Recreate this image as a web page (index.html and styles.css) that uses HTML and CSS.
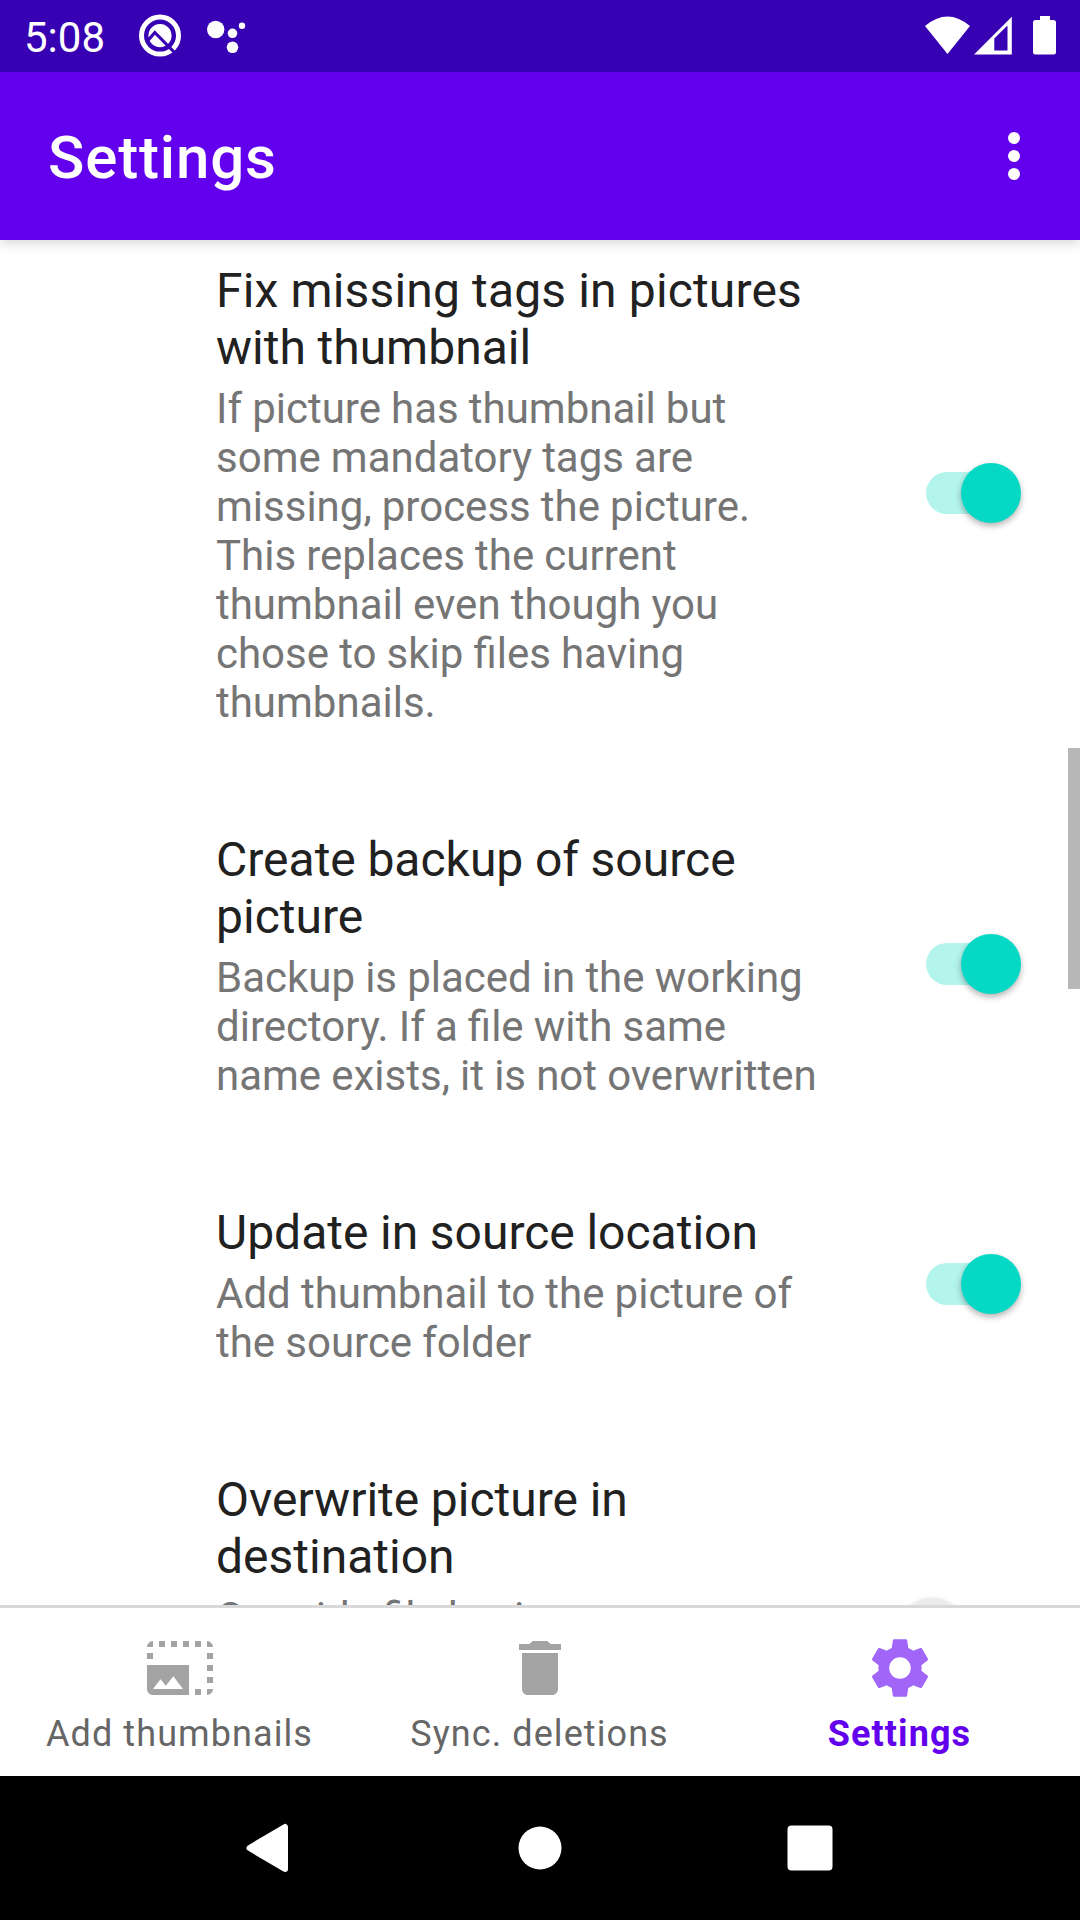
FILE: index.html
```html
<!DOCTYPE html>
<html lang="en">
<head>
<meta charset="utf-8">
<title>Settings</title>
<link rel="stylesheet" href="styles.css">
</head>
<body>
<div class="screen">
  <div class="status">
    <span class="clock">5:08</span>
    <svg class="notices" width="120" height="72" viewBox="130 0 120 72">
      <circle cx="160" cy="35.600" r="18.500" fill="none" stroke="#fff" stroke-width="5"/>
      <circle cx="160" cy="35.600" r="11.600" fill="#fff"/>
      <path d="M147.500 41L154.800 32.500L176 54" fill="none" stroke="#3700b3" stroke-width="3.200"/>
      <circle cx="215.700" cy="29.500" r="8.700" fill="#fff"/>
      <circle cx="232.500" cy="33.300" r="4.800" fill="#fff"/>
      <circle cx="242" cy="25.700" r="3.200" fill="#fff"/>
      <circle cx="232.500" cy="47.300" r="5.800" fill="#fff"/>
    </svg>
    <svg class="signals" width="140" height="72" viewBox="920 0 140 72">
      <path fill="#fff" d="M925 26Q947.500 7 970 26L947.500 54Z"/>
      <path fill="#fff" fill-rule="evenodd" d="M974 54.500L1011.800 16.700V54.500ZM994.300 38.500V50.500H1007.500V25.500Z"/>
      <path fill="#fff" d="M1040 16H1050V20H1053.500Q1056 20 1056 22.500V52Q1056 54.500 1053.500 54.500H1035.500Q1033 54.500 1033 52V22.500Q1033 20 1035.500 20H1040Z"/>
    </svg>
  </div>
  <header class="appbar">
    <h1>Settings</h1>
    <svg width="72" height="72" viewBox="0 0 24 24" fill="#fff"><circle cx="12" cy="6" r="2"/><circle cx="12" cy="12" r="2"/><circle cx="12" cy="18" r="2"/></svg>
  </header>
  <main class="content">
    <div class="list">
      <div class="pref">
        <div class="text">
          <h2><span class="loose">Fix missing tags in pictures</span><br>with thumbnail</h2>
          <p>If picture has thumbnail but<br>some mandatory tags are<br>missing, process the picture.<br>This replaces the current<br>thumbnail even though you<br>chose to skip files having<br>thumbnails.</p>
        </div>
        <div class="switch on"></div>
      </div>
      <div class="pref">
        <div class="text">
          <h2>Create backup of source<br>picture</h2>
          <p>Backup is placed in the working<br>directory. If a file with same<br>name exists, it is not overwritten</p>
        </div>
        <div class="switch on"></div>
      </div>
      <div class="pref">
        <div class="text">
          <h2>Update in source location</h2>
          <p>Add thumbnail to the picture of<br>the source folder</p>
        </div>
        <div class="switch on"></div>
      </div>
      <div class="pref">
        <div class="text">
          <h2>Overwrite picture in<br>destination</h2>
          <p class="four-lines">Override file having</p>
        </div>
        <div class="switch"></div>
      </div>
    </div>
    <div class="scrollbar"></div>
  </main>
  <nav class="tabs">
    <div class="tab">
      <svg width="72" height="72" viewBox="0 0 24 24"><path d="M21 15h2v2h-2v-2zm0-4h2v2h-2v-2zm2 8h-2v2c1 0 2-1 2-2zM13 3h2v2h-2V3zm8 4h2v2h-2V7zm0-4v2h2c0-1-1-2-2-2zM1 7h2v2H1V7zm16-4h2v2h-2V3zm0 16h2v2h-2v-2zM3 3C2 3 1 4 1 5h2V3zm6 0h2v2H9V3zM5 3h2v2H5V3zm-4 8v8c0 1.100.9 2 2 2h12V11H1zm2 8l2.500-3.210 1.790 2.150 2.500-3.220L13 19H3z"/></svg>
      <span>Add thumbnails</span>
    </div>
    <div class="tab">
      <svg width="72" height="72" viewBox="0 0 24 24"><path d="M6 19c0 1.100.9 2 2 2h8c1.100 0 2-.9 2-2V7H6v12zM19 4h-3.500l-1-1h-5l-1 1H5v2h14V4z"/></svg>
      <span>Sync. deletions</span>
    </div>
    <div class="tab active">
      <svg width="72" height="72" viewBox="0 0 24 24"><path d="M19.14,12.94c0.04-0.3,0.06-0.61,0.06-0.94c0-0.32-0.02-0.64-0.07-0.94l2.03-1.58c0.18-0.14,0.23-0.41,0.12-0.61l-1.92-3.32c-0.12-0.22-0.37-0.29-0.59-0.22l-2.39,0.96c-0.5-0.38-1.03-0.7-1.62-0.94L14.4,2.81c-0.04-0.24-0.24-0.41-0.48-0.41h-3.84c-0.24,0-0.43,0.17-0.47,0.41L9.25,5.35C8.66,5.59,8.12,5.92,7.63,6.29L5.24,5.33c-0.22-0.08-0.47,0-0.59,0.22L2.74,8.87C2.62,9.08,2.66,9.34,2.86,9.48l2.03,1.58C4.84,11.36,4.8,11.69,4.8,12s0.02,0.64,0.07,0.94l-2.03,1.58c-0.18,0.14-0.23,0.41-0.12,0.61l1.92,3.32c0.12,0.22,0.37,0.29,0.59,0.22l2.39-0.96c0.5,0.38,1.03,0.7,1.62,0.94l0.36,2.54c0.05,0.24,0.24,0.41,0.48,0.41h3.84c0.24,0,0.44-0.17,0.47-0.41l0.36-2.54c0.59-0.24,1.13-0.56,1.62-0.94l2.39,0.96c0.22,0.08,0.47,0,0.59-0.22l1.92-3.32c0.12-0.22,0.07-0.47-0.12-0.61L19.14,12.94z M12,15.6c-1.98,0-3.6-1.62-3.6-3.6s1.62-3.6,3.6-3.6s3.6,1.62,3.6,3.6S13.98,15.6,12,15.6z"/></svg>
      <span>Settings</span>
    </div>
  </nav>
  <div class="sysnav">
    <svg width="270" height="144" viewBox="0 0 270 144"><path fill="#fff" stroke="#fff" stroke-width="6" stroke-linejoin="round" d="M114.500 72L150 51V93Z"/></svg>
    <svg width="270" height="144" viewBox="0 0 270 144"><circle cx="135" cy="72" r="21.500" fill="#fff"/></svg>
    <svg width="270" height="144" viewBox="0 0 270 144"><rect x="112.500" y="49.500" width="45" height="45" rx="4" fill="#fff"/></svg>
  </div>
</div>
</body>
</html>
```
FILE: styles.css
```css
* { box-sizing: border-box; }
body { margin: 0; font-family: Roboto, sans-serif; }
h1, h2, p { margin: 0; font-weight: 400; }
svg { display: block; flex: none; }
.screen { width: 1080px; height: 1920px; display: flex; flex-direction: column; overflow: hidden; background: #fff; }
.status { height: 72px; background: #3700b3; color: #fff; display: flex; align-items: center; padding: 0 20px 0 24px; flex: none; position: relative; z-index: 2; }
.clock { font-size: 42px; line-height: 49px; width: 106px; padding-top: 3px; }
.signals { margin-left: auto; }
.appbar { height: 168px; background: #6200ee; color: #fff; display: flex; align-items: center; justify-content: space-between; padding: 0 30px 0 48px; flex: none; position: relative; z-index: 1; box-shadow: 0 3px 12px rgba(0,0,0,.17); }
.appbar h1 { font-size: 60px; line-height: 70px; font-weight: 500; padding-top: 4px; letter-spacing: .85px; }
.content { height: 1365px; flex: none; overflow: hidden; position: relative; }
.list { margin-top: -32px; }
.pref { display: flex; align-items: center; justify-content: space-between; padding: 54px 48px 50px 216px; }
.text { white-space: nowrap; }
.text h2 { font-size: 48px; line-height: 57px; color: #212121; word-spacing: -.3px; }
.text .loose { letter-spacing: .15px; word-spacing: 0; }
.text p { font-size: 42px; line-height: 49px; color: #757575; margin-top: 8px; word-spacing: -.3px; }
.text .four-lines { min-height: 196px; }
.switch { width: 106px; height: 42px; margin-bottom: 4px; border-radius: 21px; position: relative; flex: none; }
.switch::before { content: ""; position: absolute; left: 0; top: 0; width: 90px; height: 42px; border-radius: 21px; background: #b2b2b2; }
.switch::after { content: ""; position: absolute; left: -24px; top: -9px; width: 60px; height: 60px; border-radius: 50%; background: #ececec; box-shadow: 0 3px 6px rgba(0,0,0,.3); }
.switch.on::before { background: #b3f4ed; }
.switch.on::after { left: 35px; background: #05d8c4; }
.scrollbar { position: absolute; right: 0; top: 508px; width: 12px; height: 241px; background: #b8b8b8; }
.tabs { height: 171px; flex: none; border-top: 3px solid #d9d9d9; display: flex; background: #fff; }
.tab { width: 360px; padding-top: 24px; display: flex; flex-direction: column; align-items: center; color: #666; font-size: 36px; line-height: 42px; letter-spacing: 1.08px; }
.tab svg { fill: #a3a3a3; }
.tab span { margin: 9px 1px 0 0; }
.tab.active { color: #6200ee; font-weight: 700; }
.tab.active svg { fill: #a166f7; }
.sysnav { height: 144px; flex: none; background: #000; display: flex; justify-content: center; }
```
